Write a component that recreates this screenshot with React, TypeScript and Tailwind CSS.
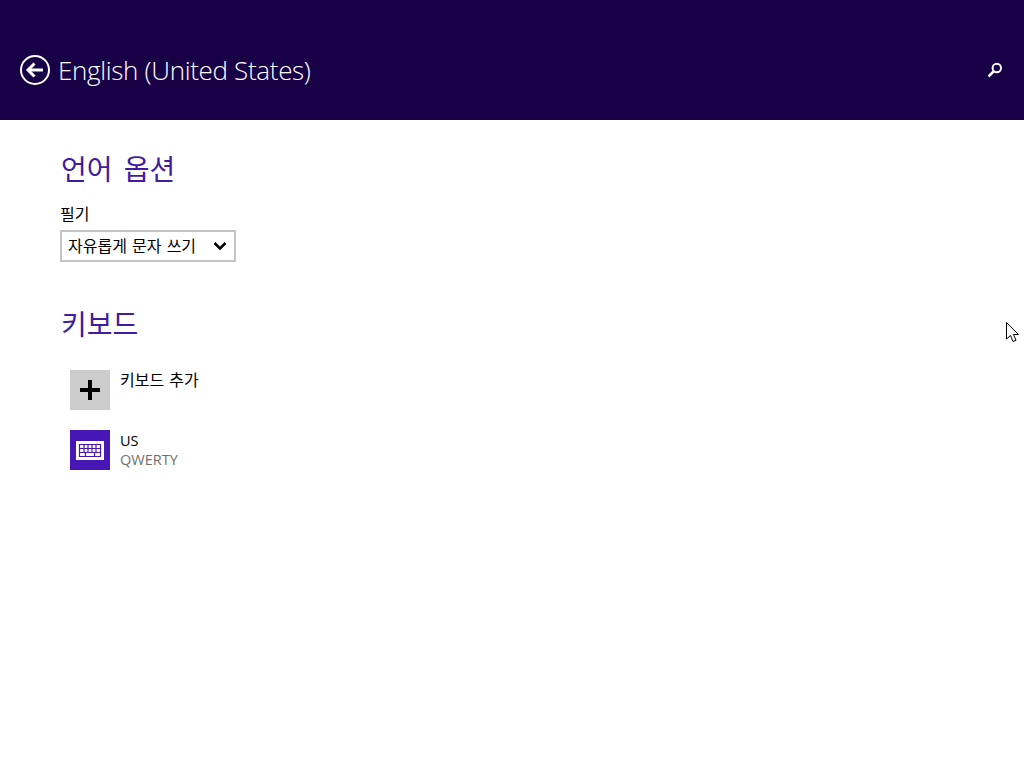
export default function App() {
  const font = "font-['Open_Sans','Noto_Sans_CJK_KR',sans-serif]";
  return (
    <div className={`relative flex h-[768px] w-[1024px] flex-col overflow-hidden bg-white ${font}`}>
      <header className="flex h-[120px] items-center justify-between bg-[#180047] pl-[20px] pr-[21px] pt-[20px] text-white">
        <div className="flex items-center gap-[8px]">
          <svg width="30" height="30" viewBox="0 0 30 30" fill="none" stroke="white">
            <circle cx="15" cy="15" r="14" strokeWidth="2" />
            <path d="M8 15H23" strokeWidth="3" />
            <path d="M14.500 8.500L8 15l6.500 6.500" strokeWidth="3" />
          </svg>
          <h1 className="text-[26px] font-light leading-[30px] tracking-[-0.33px]">English (United States)</h1>
        </div>
        <svg width="16" height="16" viewBox="0 0 16 16" fill="none" stroke="white">
          <circle cx="9.800" cy="6" r="4.200" strokeWidth="2" />
          <path d="M6.500 9.500L1.500 14.500" strokeWidth="2.500" />
        </svg>
      </header>
      <main className="flex flex-col pl-[60px]">
        <h2 className="mt-[31px] pl-[1px] text-[28px] font-normal leading-[36px] text-[#3f1ca0] [word-spacing:4px]">언어 옵션</h2>
        <label className="mt-[17px] text-[16px] leading-[20px] text-black">필기</label>
        <div className="mt-[6px] flex h-[32px] w-[176px] items-center justify-between border-2 border-[#c4c4c4] bg-white pl-[6px] pr-[7px] text-[16px] text-black [word-spacing:1px]">
          <span>자유롭게 문자 쓰기</span>
          <svg width="14" height="10" viewBox="0 0 14 10" fill="none" stroke="black" strokeWidth="2.500">
            <path d="M1.500 2L7 7.500 12.500 2" />
          </svg>
        </div>
        <h2 className="mt-[44px] pl-[1px] text-[28px] font-normal leading-[36px] text-[#3f1ca0]">키보드</h2>
        <div className="ml-[10px] mt-[28px] flex flex-col gap-[20px]">
          <div className="flex gap-[10px]">
            <div className="flex h-[40px] w-[40px] items-center justify-center bg-[#cccccc]">
              <svg width="22" height="22" viewBox="0 0 22 22" fill="black">
                <path d="M9 1h4v8h8v4h-8v8H9v-8H1V9h8z" />
              </svg>
            </div>
            <div className="text-[16px] leading-[20px] text-black [word-spacing:1px]">키보드 추가</div>
          </div>
          <div className="flex gap-[10px]">
            <div className="flex h-[40px] w-[40px] items-center justify-center bg-[#4617b4]">
              <svg width="28" height="19" viewBox="0 0 28 19">
                <rect width="28" height="19" fill="white" />
                <path d="M3.500 3.500H24.500V15.500H3.500ZM3.500 7.500H24.500M3.500 11.500H24.500M8 3.500V11.500M12 3.500V11.500M16 3.500V11.500M20 3.500V11.500M9.500 11.500V15.500M18.500 11.500V15.500" stroke="#4617b4" strokeWidth="1.200" fill="none" />
              </svg>
            </div>
            <div className="text-[14.500px] leading-[20px]">
              <div className="pt-[1px] leading-[19px] text-black">US</div>
              <div className="text-[#6f6f6f]">QWERTY</div>
            </div>
          </div>
        </div>
      </main>
      <svg className="absolute left-[1006px] top-[322px]" width="13" height="21" viewBox="0 0 13 21" fill="white" stroke="black" strokeWidth="1">
        <path d="M0.500 0.500V17l4-3.500 2.500 6 3-1.200-2.500-5.800h5z" />
      </svg>
    </div>
  );
}
